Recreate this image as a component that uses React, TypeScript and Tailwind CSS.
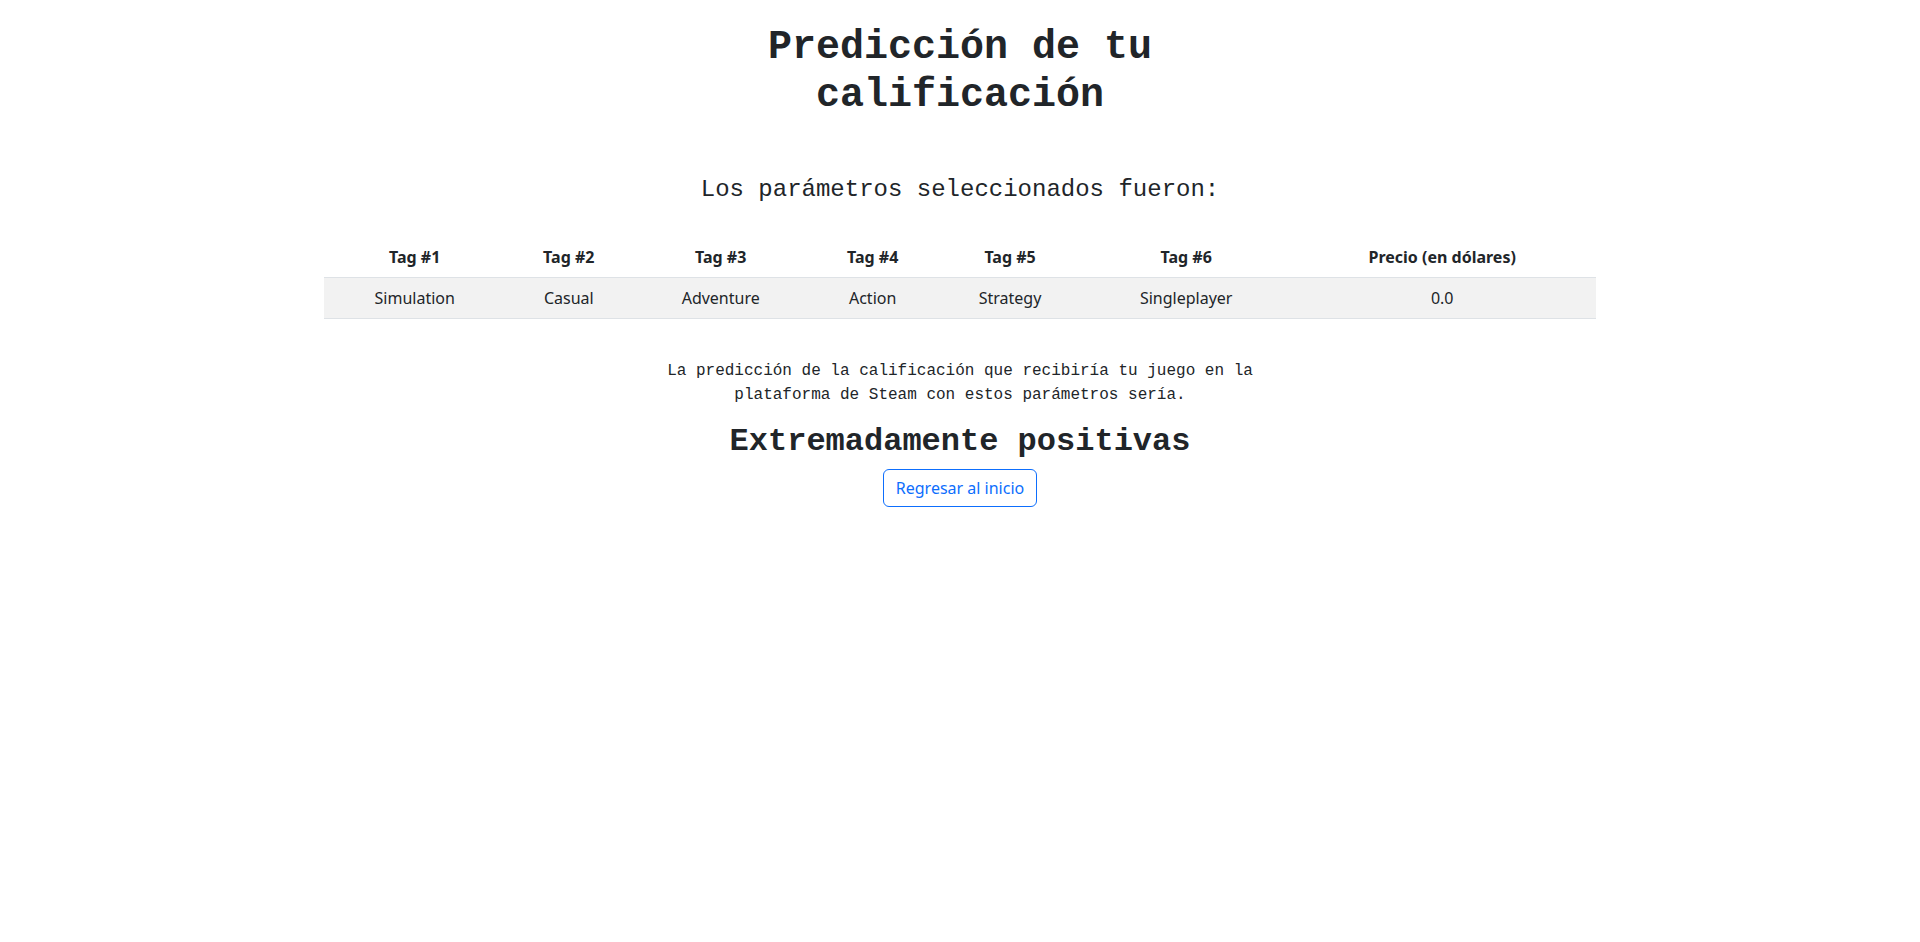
import React from "react";

const tags = ["Simulation", "Casual", "Adventure", "Action", "Strategy", "Singleplayer"];
const precio = "0.0";

const App: React.FC = () => {
  return (
    <div className="min-h-screen bg-white text-[#212529] font-['Noto_Sans',sans-serif]">
      <div className="mx-auto max-w-[1320px] px-3">
        {/* Titulo */}
        <div className="mx-auto max-w-[624px] text-center">
          <h1 className="mt-6 text-[40px] leading-[48px] font-bold font-['Liberation_Mono',monospace]">
            Predicción de tu calificación
          </h1>
        </div>

        <h4 className="mt-[56px] text-center text-2xl leading-[28.8px] font-['Liberation_Mono',monospace]">
          Los parámetros seleccionados fueron:
        </h4>

        {/* Tabla de parametros */}
        <div className="px-3 mt-[32px]">
          <table className="w-full border-collapse text-center text-base leading-6">
            <thead>
              <tr>
                {tags.map((_, i) => (
                  <th key={i} className="p-2 font-bold border-b border-[#dee2e6]">
                    Tag #{i + 1}
                  </th>
                ))}
                <th className="p-2 font-bold border-b border-[#dee2e6]">Precio (en dólares)</th>
              </tr>
            </thead>
            <tbody>
              <tr className="bg-[#f2f2f2]">
                {tags.map((tag) => (
                  <td key={tag} className="p-2 border-b border-[#dee2e6]">
                    {tag}
                  </td>
                ))}
                <td className="p-2 border-b border-[#dee2e6]">{precio}</td>
              </tr>
            </tbody>
          </table>
        </div>

        {/* Resultado */}
        <div className="mx-auto max-w-[624px] text-center mt-[40px]">
          <p className="mb-4 text-base leading-6 font-['Liberation_Mono',monospace]">
            La predicción de la calificación que recibiría tu juego en la plataforma de Steam con estos parámetros sería.
          </p>
          <h2 className="text-[32px] leading-[38.4px] font-bold font-['Liberation_Mono',monospace]">
            Extremadamente positivas
          </h2>
          <button className="mt-2 rounded-md border border-[#0d6efd] px-3 py-1.5 text-base leading-6 text-[#0d6efd] font-['Noto_Sans',sans-serif]">
            Regresar al inicio
          </button>
        </div>
      </div>
    </div>
  );
};

export default App;
